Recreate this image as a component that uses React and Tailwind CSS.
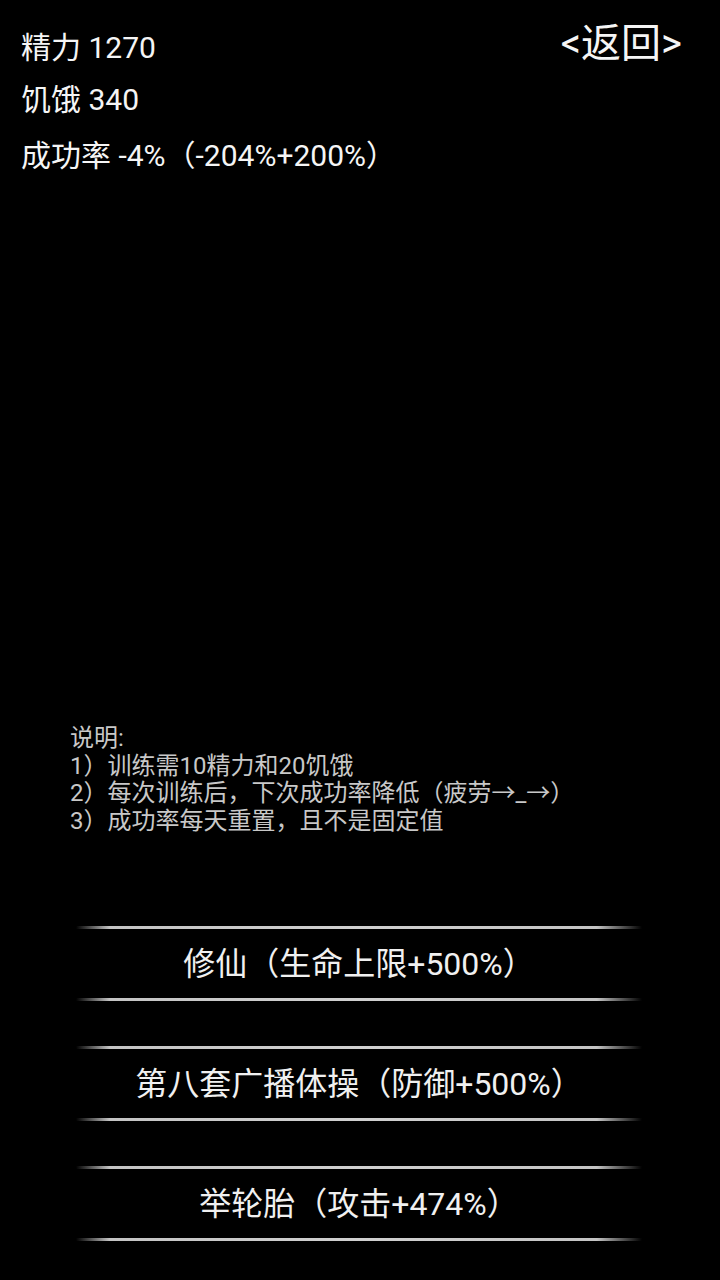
import React from 'react';

const font = { fontFamily: 'Roboto, "Noto Sans CJK SC", sans-serif' };

const trainings = [
  '修仙（生命上限+500%）',
  '第八套广播体操（防御+500%）',
  '举轮胎（攻击+474%）',
];

const notes = [
  '说明:',
  '1）训练需10精力和20饥饿',
  '2）每次训练后，下次成功率降低（疲劳→_→）',
  '3）成功率每天重置，且不是固定值',
];

const Divider = () => (
  <div className="h-[3px] w-full bg-[linear-gradient(to_right,transparent,#c4c4c4_6%,#d0d0d0_50%,#c4c4c4_92%,transparent)]" />
);

const TrainButton = ({ label }) => (
  <button className="flex flex-col w-[566px] ml-[76px]">
    <Divider />
    <div className="h-[69px] flex items-center justify-center text-[32px] text-[#f0f0f0]">{label}</div>
    <Divider />
  </button>
);

export default function App() {
  return (
    <div className="w-[720px] h-[1280px] bg-black flex flex-col text-white" style={font}>
      {/* Header: stats and back */}
      <div className="flex justify-between items-start pl-[21px] pr-[38px]">
        <div className="flex flex-col pt-[30px] text-[30px] leading-[36px] text-[#f5f5f5]">
          <div>精力 1270</div>
          <div className="mt-[16px]">饥饿 340</div>
          <div className="mt-[20px]">成功率 -4%（-204%+200%）</div>
        </div>
        <div className="mt-[20px] text-[40px] leading-[48px] text-[#f5f5f5]">&lt;返回&gt;</div>
      </div>

      <div className="flex-1" />

      {/* Notes */}
      <div className="pl-[70px] text-[24px] leading-[27.5px] text-[#c8c8c8]">
        {notes.map((n) => (
          <div key={n}>{n}</div>
        ))}
      </div>

      {/* Training options */}
      <div className="flex flex-col gap-[45px] mt-[91px] pb-[39px]">
        {trainings.map((t) => (
          <TrainButton key={t} label={t} />
        ))}
      </div>
    </div>
  );
}
